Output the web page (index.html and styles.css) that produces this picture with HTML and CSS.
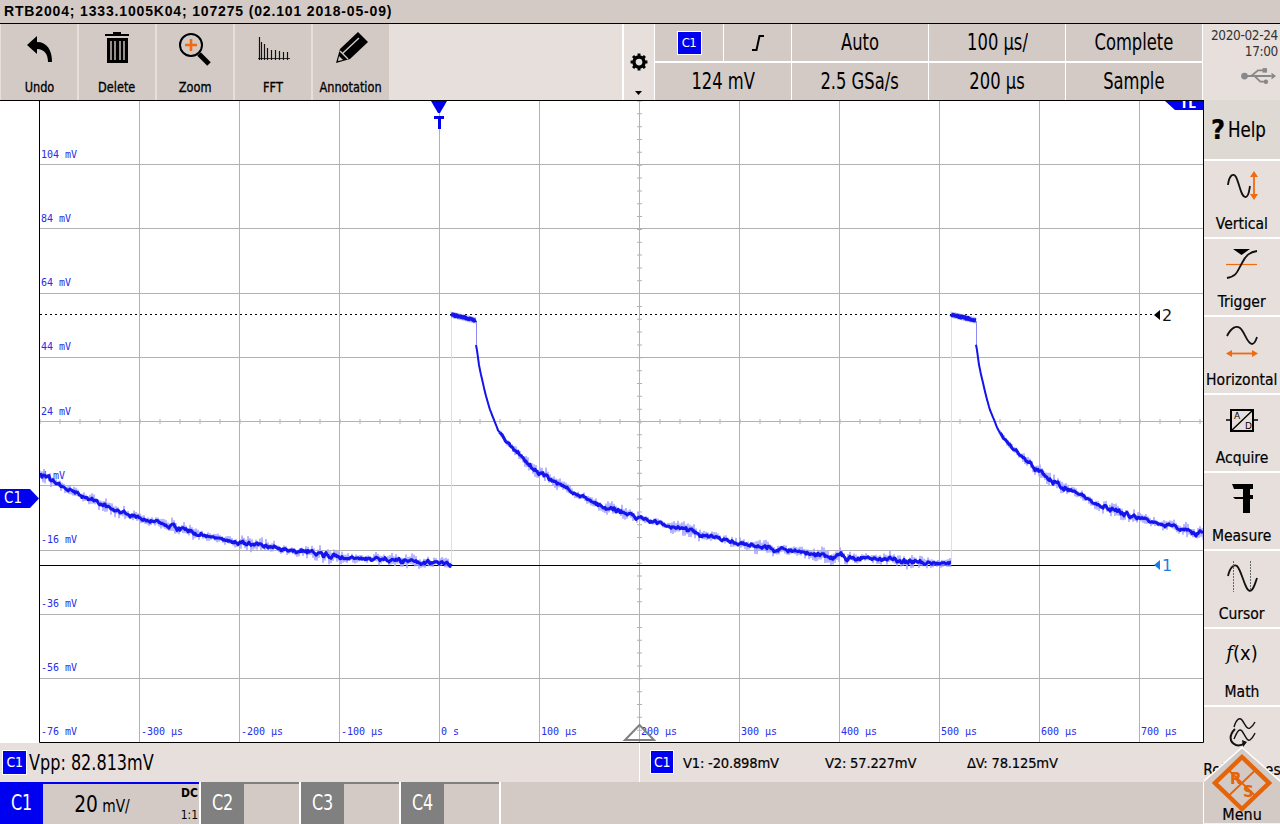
FILE: index.html
```html
<!DOCTYPE html>
<html lang="en">
<head>
<meta charset="utf-8">
<title>RTB2004</title>
<link rel="stylesheet" href="styles.css">
</head>
<body>
<div class="screen">
  <header class="titlebar">RTB2004; 1333.1005K04; 107275 (02.101 2018-05-09)</header>
  <section class="topbar">
    <div class="tools">
      <div class="tool">
        <svg class="tool-icon" viewBox="0 0 76 56"><path d="M26 21 L36 12 L36 18 C46 18 51 26 51 38 L47 38 C47 30 43 25 36 25 L36 30 Z" fill="#000"/></svg>
        <span>Undo</span>
      </div>
      <div class="tool">
        <svg class="tool-icon" viewBox="0 0 76 56"><path d="M26 10h24v2H26zM34 8h8v2h-8z" fill="#000"/><path d="M28 14h21v25H28z" fill="#000"/><path d="M32 17v19M36 17v19M41 17v19M45 17v19" stroke="#d3cac5" stroke-width="1.4"/></svg>
        <span>Delete</span>
      </div>
      <div class="tool">
        <svg class="tool-icon" viewBox="0 0 76 56"><circle cx="34" cy="21" r="11" fill="none" stroke="#000" stroke-width="2"/><path d="M42 30l10 10" stroke="#000" stroke-width="5"/><path d="M34 15v12M28 21h12" stroke="#f26a10" stroke-width="2.6"/></svg>
        <span>Zoom</span>
      </div>
      <div class="tool">
        <svg class="tool-icon" viewBox="0 0 76 56"><path d="M23 34.500h32" stroke="#333" stroke-width="1"/><path d="M24.500 13v23M26.500 18v18M29.500 20v16M32.500 24v12M36.500 26v10M40.500 26v10M44.500 27v9M48.500 28v8M52.500 28v8" stroke="#111" stroke-width="1.200" fill="none"/></svg>
        <span>FFT</span>
      </div>
      <div class="tool tool-wide">
        <svg class="tool-icon" viewBox="0 0 76 56"><path d="M23 39 L27 25 L45 8 L55 18 L37 35 Z" fill="#000"/><path d="M27 27 L35 35 M30 29 L46 14" stroke="#d3cac5" stroke-width="1.4" fill="none"/><path d="M25 37 L26 32 L30 36 Z" fill="#d3cac5"/></svg>
        <span>Annotation</span>
      </div>
    </div>
    <div class="gear-cell">
      <svg class="gear" viewBox="0 0 16 16"><circle cx="8" cy="8" r="4.500" fill="none" stroke="#000" stroke-width="3"/><path d="M8 0.500v3M8 12.500v3M0.500 8h3M12.500 8h3M2.700 2.700l2.100 2.100M11.200 11.200l2.100 2.100M13.300 2.700l-2.100 2.100M4.800 11.200l-2.100 2.100" stroke="#000" stroke-width="2.600"/></svg>
      <svg class="caret" viewBox="0 0 7 4"><path d="M0 0h7L3.500 4z" fill="#000"/></svg>
    </div>
    <div class="settings">
      <div class="tile"><b class="badge badge-top">C1</b></div>
      <div class="tile"><svg class="edge" viewBox="0 0 14 16"><path d="M1 15h4.500L8.500 1H13" fill="none" stroke="#000" stroke-width="2"/></svg></div>
      <div class="tile"><span>Auto</span></div>
      <div class="tile"><span>100 µs/</span></div>
      <div class="tile"><span>Complete</span></div>
      <div class="tile tile-double"><span>124 mV</span></div>
      <div class="tile"><span>2.5 GSa/s</span></div>
      <div class="tile"><span>200 µs</span></div>
      <div class="tile"><span>Sample</span></div>
    </div>
    <div class="clock">
      <div class="date">2020-02-24<br>17:00</div>
      <svg class="usb" viewBox="0 0 32 16"><path d="M4 8h24M10 8l6-5h5M13 8l5 5h4" fill="none" stroke="#888" stroke-width="1.600"/><circle cx="4" cy="8" r="3" fill="#888"/><path d="M28 5l4 3-4 3z" fill="#888"/><rect x="20" y="1" width="4" height="4" fill="#888"/><circle cx="23" cy="13" r="2" fill="#888"/></svg>
    </div>
  </section>
  <div class="middle">
    <div class="left">
      <div class="plot-row">
        <div class="gutter"><div class="c1-flag">C1</div></div>
        <div class="plot">
          <svg id="scope" class="scope" viewBox="39 101 1165 642">
            <path class="grid" d="M139.500 101V742M239.500 101V742M339.500 101V742M439.500 101V742M539.500 101V742M739.500 101V742M839.500 101V742M939.500 101V742M1039.500 101V742M1139.500 101V742M40 164.500H1203M40 228.500H1203M40 293.500H1203M40 357.500H1203M40 485.500H1203M40 550.500H1203M40 614.500H1203M40 678.500H1203"/>
            <path class="grid" d="M639.500 101V742M40 421.500H1203"/>
            <path class="ticks" d="M39.500 421.500H1203" stroke-dasharray="1 19"/>
            <path class="ticks" d="M639.500 100.500V742" stroke-dasharray="1 11.840"/>
            <g class="ylabels">
              <text x="41" y="158">104 mV</text><text x="41" y="222">84 mV</text><text x="41" y="286">64 mV</text><text x="41" y="350">44 mV</text><text x="41" y="415">24 mV</text><text x="41" y="479">4 mV</text><text x="41" y="543">-16 mV</text><text x="41" y="607">-36 mV</text><text x="41" y="671">-56 mV</text><text x="41" y="735">-76 mV</text>
              <text x="141" y="735">-300 µs</text><text x="241" y="735">-200 µs</text><text x="341" y="735">-100 µs</text><text x="441" y="735">0 s</text><text x="541" y="735">100 µs</text><text x="641" y="735">200 µs</text><text x="741" y="735">300 µs</text><text x="841" y="735">400 µs</text><text x="941" y="735">500 µs</text><text x="1041" y="735">600 µs</text><text x="1141" y="735">700 µs</text>
            </g>
            <path class="cursor-line" d="M40 565.500H1155"/>
            <path class="cursor-dots" d="M40 314.500H1155"/>
            <g id="trace"></g>
            <path class="marker-blue" d="M1160 560V570L1154 565Z"/>
            <text class="cursor-num cursor-num-1" x="1162" y="571">1</text>
            <path class="marker-black" d="M1160 310V320L1154 315Z"/>
            <text class="cursor-num" x="1162" y="321">2</text>
            <path class="trig-stem" d="M439.500 118V132"/>
            <path class="marker-trig" d="M431 101H447L440 113H438ZM434 116H444V119H441V129H438V119H434Z"/>
            <path class="trig-pos" d="M625 740L639.500 725L654 740Z"/>
            <path class="ticl-badge" d="M1165 101H1203V110H1175Z"/>
            <text class="tl-text" x="1180" y="108">TL</text>
            <path class="frame" d="M39.500 100V742.500H1203.500V100"/>
          </svg>
        </div>
      </div>
      <div class="status">
        <div class="status-left">
          <b class="badge badge-status">C1</b>
          <span class="vpp">Vpp: 82.813mV</span>
        </div>
        <div class="status-right">
          <b class="badge badge-cursor">C1</b>
          <span class="cursor-val cv1">V1: -20.898mV</span>
          <span class="cursor-val cv2">V2: 57.227mV</span>
          <span class="cursor-val">ΔV: 78.125mV</span>
        </div>
      </div>
      <div class="channels">
        <div class="channel channel-on">
          <div class="ch-name"><span>C1</span></div>
          <div class="ch-body">
            <span class="scale"><span class="scale-num">20</span> mV/</span>
            <span class="ch-meta"><b>DC</b><i>1:1</i></span>
          </div>
        </div>
        <div class="channel"><div class="ch-name"><span>C2</span></div><div class="ch-body"></div></div>
        <div class="channel"><div class="ch-name"><span>C3</span></div><div class="ch-body"></div></div>
        <div class="channel"><div class="ch-name"><span>C4</span></div><div class="ch-body"></div></div>
        <div class="channels-fill"></div>
      </div>
    </div>
    <aside class="sidebar">
      <div class="side-btn side-help"><b class="q">?</b><span>Help</span></div>
      <div class="side-btn">
        <svg class="side-icon" viewBox="0 0 76 52"><path d="M24 24C25 15 29 11 32 16C36 24 37 37 42 36C45 35 45 30 46 25" fill="none" stroke="#111" stroke-width="1.800"/><path d="M50 12v24" stroke="#f26a10" stroke-width="1.800"/><path d="M46 16l4-6 4 6zM46 33l4 6 4-6z" fill="#f26a10"/></svg>
        <span>Vertical</span>
      </div>
      <div class="side-btn">
        <svg class="side-icon" viewBox="0 0 76 52"><path d="M29 10h17l-8.500 6z" fill="#000"/><path d="M22 25.500h31" stroke="#f26a10" stroke-width="1.200"/><path d="M23 39C33 37 33 33 38 24C42 16 46 13 53 12" fill="none" stroke="#111" stroke-width="1.800"/></svg>
        <span>Trigger</span>
      </div>
      <div class="side-btn">
        <svg class="side-icon" viewBox="0 0 76 52"><path d="M23 19C27 11 32 8 36 11C41 15 43 27 48 27C51 27 52 23 53 20" fill="none" stroke="#111" stroke-width="1.800"/><path d="M26 36.500h24" stroke="#f26a10" stroke-width="1.800"/><path d="M28 33l-6 3.500 6 3.500zM48 33l6 3.500-6 3.500z" fill="#f26a10"/></svg>
        <span>Horizontal</span>
      </div>
      <div class="side-btn">
        <svg class="side-icon" viewBox="0 0 76 52"><rect x="27" y="15" width="22" height="21" fill="none" stroke="#000" stroke-width="2"/><path d="M22 25h5M49 25h5M27 36L49 15" stroke="#000" stroke-width="1.400"/><text class="ad" x="30" y="24">A</text><text class="ad" x="41" y="34">D</text></svg>
        <span>Acquire</span>
      </div>
      <div class="side-btn">
        <svg class="side-icon" viewBox="0 0 76 52"><path d="M28 11H49V16H46V22H49V26H46V40H39V26H31L29 24H39V16H30Z" fill="#000"/></svg>
        <span>Measure</span>
      </div>
      <div class="side-btn">
        <svg class="side-icon" viewBox="0 0 76 52"><path d="M24 25C26 16 30 13 33 15C38 20 41 40 46 40C49 40 51 33 53 27" fill="none" stroke="#111" stroke-width="1.800"/><path d="M29.500 10v31M46.500 10v31" stroke="#666" stroke-width="1" stroke-dasharray="2 1"/></svg>
        <span>Cursor</span>
      </div>
      <div class="side-btn">
        <div class="fx"><i>f</i>(x)</div>
        <span>Math</span>
      </div>
      <div class="side-btn side-ref">
        <svg class="side-icon" viewBox="0 0 76 52"><path d="M30 20C32 13 35 10 38 13C41 17 43 23 46 21C49 19 50 17 51 15M30 32C33 25 35 21 38 24C41 28 43 35 46 33C49 31 50 28 51 26" fill="none" stroke="#111" stroke-width="1.400"/><path d="M31 22C25 28 25 35 32 38C35 39 38 38 41 36" fill="none" stroke="#111" stroke-width="2"/><path d="M38 33l5 2-4 5z" fill="#111"/></svg>
        <span>References</span>
      </div>
      <div class="menu-btn">
        <svg class="menu-shape" viewBox="0 0 76 77"><path d="M-1 77V35L38 0.500L77 35V77Z" fill="#d3cac5" stroke="#fff" stroke-width="1.500"/><path d="M38 10L65 36L38 62L11 36Z" fill="none" stroke="#e5640a" stroke-width="4.500"/><path d="M24.500 23L51.500 49M51.500 23L24.500 49" stroke="#e5640a" stroke-width="1.800"/><text class="rs" x="26" y="37">R</text><text class="rs" x="39" y="50">S</text></svg>
        <span class="menu-label">Menu</span>
      </div>
    </aside>
  </div>
</div>
<script src="script.js"></script>
</body>
</html>
```
FILE: styles.css
```css
* { box-sizing: border-box; }
html, body { margin: 0; padding: 0; }
body {
  width: 1280px;
  height: 824px;
  overflow: hidden;
  background: #fff;
  font-family: "DejaVu Sans", sans-serif;
  font-stretch: condensed;
  color: #000;
}
.screen { width: 1280px; height: 824px; display: flex; flex-direction: column; }

.titlebar {
  height: 24px;
  background: #d3cac5;
  border-bottom: 1px solid #000;
  font: bold 14px/23px "Liberation Sans", sans-serif;
  letter-spacing: 0.84px;
  padding: 0 0 0 4px;
  white-space: nowrap;
}

.topbar { height: 76px; display: flex; background: #e6dfdc; }
.tools { width: 624px; display: flex; gap: 2px; padding-left: 1px; border-right: 2px solid #fff; }
.tool {
  width: 76px;
  height: 76px;
  background: #d3cac5;
  display: flex;
  flex-direction: column;
  align-items: center;
  font-size: 14px;
}
.tool span { line-height: 20px; margin-top: -3px; -webkit-text-stroke: 0.3px #000; transform: scaleX(0.9); white-space: nowrap; }
.tool-icon { width: 76px; height: 56px; display: block; flex: none; }
.gear-cell { width: 30px; height: 76px; position: relative; }
.gear { position: absolute; left: 6px; top: 29px; width: 18px; height: 18px; }
.caret { position: absolute; left: 11px; top: 67px; width: 7px; height: 4px; }
.settings {
  width: 549px;
  height: 76px;
  display: grid;
  grid-template-columns: 68px 67px 136px 136px 136px;
  grid-template-rows: 37px 37px;
  column-gap: 1px;
  row-gap: 2px;
  background: #fff;
  border-left: 1px solid #fff;
}
.tile {
  background: #d3cac5;
  display: flex;
  align-items: center;
  justify-content: center;
  font-size: 23px;
}
.tile span { transform: scaleX(0.79); white-space: nowrap; margin-top: -2px; }
.tile-double { grid-column: span 2; }
.badge {
  display: flex;
  align-items: center;
  justify-content: center;
  background: #0000f0;
  color: #fff;
  border: 1px solid #fff;
  font-weight: 400;
  letter-spacing: -0.5px;
}
.badge-top { width: 25px; height: 24px; font-size: 13px; }
.edge { width: 14px; height: 16px; }
.clock { width: 76px; display: flex; flex-direction: column; align-items: flex-end; padding: 3px 1px 0 0; }
.date { font-size: 13.500px; line-height: 16px; text-align: right; color: #333; letter-spacing: -0.35px; }
.usb { width: 36px; height: 18px; margin: 8px 2px 0 0; }

.middle { flex: 1; display: flex; min-height: 0; }
.left { width: 1204px; display: flex; flex-direction: column; }
.plot-row { height: 643px; display: flex; border-top: 1px solid #000; background: #fff; }
.gutter { width: 39px; position: relative; }
.c1-flag {
  position: absolute;
  left: 0;
  top: 388px;
  width: 39px;
  height: 19px;
  background: #0000f0;
  color: #fff;
  font-size: 15px;
  line-height: 19px;
  padding-left: 4px;
  clip-path: polygon(0 0, 30px 0, 39px 50%, 30px 100%, 0 100%);
}
.plot { width: 1165px; height: 642px; }
.scope { display: block; width: 1165px; height: 642px; overflow: hidden; }
.grid { stroke: #b2b2b2; stroke-width: 1; fill: none; }
.ticks { stroke: #b2b2b2; stroke-width: 5; fill: none; }
.ylabels text { font: 10px "DejaVu Sans Mono", monospace; fill: #2a2ae8; }
.cursor-line { stroke: #000; stroke-width: 1; }
.cursor-dots { stroke: #000; stroke-width: 1; stroke-dasharray: 2 3; }
.trace-halo { fill: none; stroke: #a4a4ff; stroke-width: 1; }
.trace-main { fill: none; stroke: #1414ec; stroke-linejoin: round; }
.trace-fade { stroke: #dcdcf8; stroke-width: 1; fill: none; }
.trace-drop { stroke: #8c8cf8; stroke-width: 1; fill: none; }
.marker-blue { fill: #1a7fe0; }
.marker-black { fill: #000; }
.cursor-num { font: 16px "DejaVu Sans", sans-serif; fill: #111; }
.cursor-num-1 { fill: #1a7fe0; }
.trig-stem { stroke: #b2b2b2; stroke-width: 1; }
.marker-trig { fill: #0000f0; }
.trig-pos { fill: none; stroke: #808080; stroke-width: 2; }
.ticl-badge { fill: #0000f0; }
.tl-text { font: bold 12px "DejaVu Sans", sans-serif; fill: #fff; }
.frame { fill: none; stroke: #000; stroke-width: 1; }

.status { height: 39px; background: #e6dfdc; display: flex; }
.status-left { width: 639px; display: flex; align-items: center; padding-left: 2px; }
.badge-status { width: 25px; height: 25px; font-size: 14px; margin-top: -1px; }
.vpp { font-size: 21px; margin-left: 2px; white-space: nowrap; transform: scaleX(0.85); transform-origin: left center; }
.status-right {
  flex: 1;
  display: flex;
  align-items: center;
  border-left: 1px solid #fff;
  padding-left: 10px;
  font-size: 14.600px;
}
.badge-cursor { width: 24px; height: 24px; font-size: 14px; margin-right: 9px; margin-top: -1px; }
.cursor-val { white-space: nowrap; letter-spacing: -0.2px; -webkit-text-stroke: 0.2px #000; }
.cv1 { width: 142px; }
.cv2 { width: 142px; }

.channels { height: 42px; display: flex; gap: 2px; background: #fff; }
.channel { width: 98px; display: flex; border-top: 2px solid #808080; }
.channel-on { width: 199px; border-top-color: #0000f0; }
.ch-name {
  width: 43px;
  margin-top: -2px;
  background: #808080;
  color: #fff;
  font-size: 21px;
  display: flex;
  align-items: center;
  justify-content: center;
}
.ch-name span { transform: scaleX(0.85); }
.channel-on .ch-name { background: #0000f0; }
.ch-body { flex: 1; background: #d3cac5; position: relative; display: flex; justify-content: center; align-items: center; }
.scale { font-size: 17px; padding-right: 42px; white-space: nowrap; transform: scaleX(0.9); }
.scale-num { font-size: 23px; }
.ch-meta { position: absolute; right: 1px; top: 0; bottom: 0; display: flex; flex-direction: column; align-items: flex-end; justify-content: space-between; }
.ch-meta b { font-size: 12px; line-height: 18px; font-weight: bold; }
.ch-meta i { font-size: 12px; line-height: 18px; font-style: normal; }
.channels-fill { flex: 1; background: #d3cac5; margin-right: 1px; }

.sidebar {
  width: 76px;
  background: #fff;
  display: flex;
  flex-direction: column;
  gap: 2px;
  position: relative;
  overflow: hidden;
}
.side-btn {
  height: 76px;
  flex: none;
  background: #e6dfdc;
  display: flex;
  flex-direction: column;
  align-items: center;
  font-size: 16px;
  line-height: 22px;
  -webkit-text-stroke: 0.2px #000;
}
.side-btn > span { white-space: nowrap; margin-top: 0; transform: scaleX(0.97); }
.side-icon { width: 76px; height: 52px; flex: none; display: block; }
.side-help {
  height: 59px;
  background: #dfd9d4;
  flex-direction: row;
  justify-content: flex-start;
  padding-left: 7px;
  align-items: center;
}
.side-btn.side-help > span { font-size: 22px; margin-left: 3px; transform: scaleX(0.84); transform-origin: left center; }
.q { font-size: 27px; font-weight: bold; }
.fx { height: 52px; font-size: 20px; line-height: 48px; -webkit-text-stroke: 0; }
.fx i { font-family: "DejaVu Serif", serif; }
.ad { font: 9px "DejaVu Sans", sans-serif; fill: #000; stroke: none; }
.menu-btn { position: absolute; left: 0; top: 647px; width: 76px; height: 77px; }
.menu-shape { width: 76px; height: 77px; display: block; overflow: visible; }
.rs { font: bold 15px "DejaVu Sans", sans-serif; fill: #e5640a; }
.menu-label { position: absolute; left: 0; right: 0; bottom: -1px; text-align: center; font-size: 16px; line-height: 20px; -webkit-text-stroke: 0.2px #000; }
```
FILE: script.js
```js
// Draws the noisy captured waveform into the scope's SVG from a fixed seed.
(function () {
  var NS = "http://www.w3.org/2000/svg";
  var group = document.getElementById("trace");
  var seed = 20200224;
  function rnd() {
    seed = (seed * 1664525 + 1013904223) >>> 0;
    return seed / 4294967296 - 0.5;
  }
  var table = [[0,345],[1,350],[3,365],[5,375],[10,396],[14,410],[22,430],[30,441],[44,455],[64,473],[74,480],[124,505],[163,518],[228,535],[263,543],[363,557],[463,563],[475,564]];
  function level(t) {
    for (var i = 1; i < table.length; i++) {
      if (t <= table[i][0]) {
        var a = table[i - 1], b = table[i];
        return a[1] + (b[1] - a[1]) * (t - a[0]) / (b[0] - a[0]);
      }
    }
    return 564;
  }
  function add(cls, d, width) {
    var p = document.createElementNS(NS, "path");
    p.setAttribute("class", cls);
    p.setAttribute("d", d);
    if (width) p.setAttribute("stroke-width", width);
    group.appendChild(p);
  }
  function decay(x0, x1) {
    var main = "", thin = "", halo = "", wob = 0;
    for (var x = x0; x <= x1; x += 1) {
      var t = x < 476 ? x + 24 : (x - 476) % 500;
      var amp = t < 22 ? 0.15 : Math.min(1, t / 40);
      var burst = 0.8 + 0.9 * Math.pow(Math.sin(x / 23), 2);
      wob = wob * 0.7 + rnd() * 2.4 * burst;
      var y = level(t) + wob * amp;
      var m = y + rnd() * 1.4 * amp;
      var h = y + (x % 2 ? 1 : -1) * (1.8 + Math.abs(rnd()) * 7 * burst) * amp;
      var pt = x + " " + m.toFixed(1);
      if (t <= 24) thin += (thin ? "L" : "M") + pt;
      if (t >= 24) main += (main ? "L" : "M") + pt;
      halo += (halo ? "L" : "M") + x + " " + h.toFixed(1);
    }
    add("trace-halo", halo);
    if (thin) add("trace-main", thin, 2);
    add("trace-main", main, 3);
  }
  function pulse(x) {
    add("trace-fade", "M" + (x + 0.5) + " 314V564");
    add("trace-drop", "M" + (x + 25.5) + " 321V346");
    var top = "", low = "";
    for (var i = 0; i <= 25; i += 1) {
      var y = 314.5 + i * 0.24;
      top += (top ? "L" : "M") + (x + i) + " " + (y + rnd() * 1.4).toFixed(1);
      low += (low ? "L" : "M") + (x + i) + " " + (y + (i % 2 ? 3.2 : -3)).toFixed(1);
    }
    add("trace-halo", low);
    add("trace-main", top, 4);
  }
  decay(40, 451);
  pulse(451);
  decay(476, 951);
  pulse(951);
  decay(976, 1203);
})();
```
